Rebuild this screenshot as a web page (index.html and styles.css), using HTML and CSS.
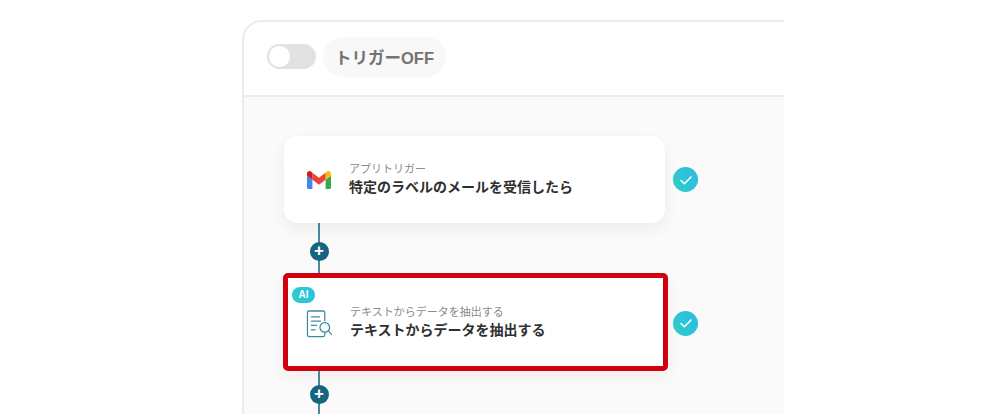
FILE: index.html
```html
<!DOCTYPE html>
<html lang="ja">
<head>
  <meta charset="UTF-8" />
  <title>フローボット</title>
  <link rel="stylesheet" href="styles.css">
</head>
<body>
  <div class="stage">
    <div class="panel">
      <!-- header -->
      <header class="panel-head">
        <span class="toggle"><span class="toggle-knob"></span></span>
        <span class="trigger-pill">トリガーOFF</span>
      </header>

      <!-- flow -->
      <div class="flow">
        <div class="step">
          <div class="card">
            <svg class="icon-gmail" viewBox="0 0 24 18" width="24" height="18">
              <path d="M1.6 18H5.4V8.8L0 4.7V16.4C0 17.3.7 18 1.6 18Z" fill="#4285f4"/>
              <path d="M18.6 18H22.4C23.3 18 24 17.3 24 16.4V4.7L18.6 8.8Z" fill="#34a853"/>
              <path d="M18.6 1.7V8.8L24 4.7V2.6C24 .6 21.7-.6 20.1.6Z" fill="#fbbc04"/>
              <path d="M5.4 8.8V1.7L12 6.7 18.6 1.7V8.8L12 13.7Z" fill="#ea4335"/>
              <path d="M0 2.6V4.7L5.4 8.8V1.7L3.9.6C2.3-.6 0 .6 0 2.6Z" fill="#c5221f"/>
            </svg>
            <div class="card-text">
              <div class="card-sub">アプリトリガー</div>
              <div class="card-title">特定のラベルのメールを受信したら</div>
            </div>
          </div>
          <span class="check">
            <svg viewBox="0 0 24 24" width="24" height="24"><path d="M7 12.5l3.4 3.3L17 9" fill="none" stroke="#fff" stroke-width="1.6" stroke-linecap="round" stroke-linejoin="round"/></svg>
          </span>
        </div>

        <div class="link link-first"><span class="plus">+</span></div>

        <div class="step step-active">
          <div class="frame">
            <div class="card card-framed">
              <span class="ai-badge">AI</span>
              <svg class="icon-doc" viewBox="0 0 28 30" width="27" height="29">
                <g fill="none" stroke="#3d8ba5" stroke-width="1.300" stroke-linecap="round" stroke-linejoin="round">
                  <path d="M19.500 11V2.500C19.500 1.500 19 1 18 1H3C2 1 1.500 1.500 1.500 2.500V26C1.500 27 2 27.500 3 27.500H18C19 27.500 19.500 27 19.500 26V23.500"/>
                  <path d="M5.500 7H14M5.500 11.500H15M5.500 16H11M5.500 20.500H9.500"/>
                  <circle cx="19.500" cy="18" r="5"/>
                  <path d="M23.200 21.700L26.500 25.500"/>
                </g>
              </svg>
              <div class="card-text">
                <div class="card-sub">テキストからデータを抽出する</div>
                <div class="card-title">テキストからデータを抽出する</div>
              </div>
            </div>
          </div>
          <span class="check check-active">
            <svg viewBox="0 0 24 24" width="24" height="24"><path d="M7 12.5l3.4 3.3L17 9" fill="none" stroke="#fff" stroke-width="1.6" stroke-linecap="round" stroke-linejoin="round"/></svg>
          </span>
        </div>

        <div class="link link-second"><span class="plus">+</span></div>
      </div>
    </div>
  </div>
</body>
</html>
```

FILE: styles.css
```css
/* --- design tokens --- */
:root {
  --teal: #17647f;
  --red: #d0000f;
  --line: #ececec;
  --text: #2f2f2f;
}

* { box-sizing: border-box; margin:0; padding:0; }

body {
  font-family: "Liberation Sans", "Noto Sans CJK JP", sans-serif;
  background:#fff;
  color:var(--text);
  overflow:hidden;
}

.stage {
  width:784px;
  height:414px;
  padding:20px 0 0 242px;
  overflow:hidden;
}

.panel {
  width:640px;
  height:520px;
  background:#fafafa;
  border:2px solid var(--line);
  border-radius:20px 0 0 0;
}

/* --- header --- */
.panel-head {
  height:75px;
  background:#fff;
  border-bottom:2px solid var(--line);
  border-radius:18px 0 0 0;
  padding:0 0 4px 23px;
  display:flex;
  align-items:center;
  gap:7px;
}

.toggle {
  width:49px; height:25px;
  background:#e2e2e2;
  border-radius:13px;
  padding:2px;
  display:flex;
}
.toggle-knob {
  width:21px; height:21px;
  background:#fff;
  border-radius:50%;
}

.trigger-pill {
  height:40px;
  width:123px;
  padding-left:12px;
  background:#f8f8f8;
  border-radius:20px;
  display:flex;
  align-items:center;
  font-size:16.500px;
  font-weight:700;
  color:#737373;
}

/* --- flow --- */
.flow { padding:39px 0 0 40px; }

.step {
  display:flex;
  align-items:center;
  gap:8px;
}
.step-active { margin-left:-1px; gap:5px; }

.card {
  width:381px;
  height:87px;
  background:#fff;
  border-radius:14px;
  box-shadow:0 6px 16px rgba(0,0,0,.06);
  padding-left:23px;
  display:flex;
  align-items:center;
  gap:18px;
}

.frame {
  width:385px;
  height:98px;
  border:5px solid var(--red);
  border-radius:5px;
  background:#fff;
  box-shadow:0 6px 16px rgba(0,0,0,.05);
}
.card-framed {
  position:relative;
  width:375px;
  height:88px;
  box-shadow:none;
  padding-left:18px;
  gap:17px;
}

.icon-gmail { flex:none; }
.icon-doc { flex:none; margin-top:4px; }

.card-sub {
  font-size:11px;
  line-height:16px;
  color:#8a8a8a;
}
.card-title {
  font-size:14px;
  font-weight:700;
  line-height:21px;
  color:var(--text);
}

.ai-badge {
  position:absolute;
  left:4px; top:9px;
  width:23px; height:16px;
  border-radius:8px;
  background:linear-gradient(90deg,#2ecdc7,#2cc0e0);
  color:#fff;
  font-size:10px;
  font-weight:700;
  line-height:16px;
  text-align:center;
}

.check {
  width:25px; height:25px;
  border-radius:50%;
  background:linear-gradient(60deg,#2fd0c0,#2cb8e8);
  display:flex;
  align-items:center;
  justify-content:center;
}
.check-active { margin-top:2px; }

/* --- connector --- */
.link {
  width:2px;
  height:50px;
  margin-left:34px;
  background:#4a8aa2;
  display:flex;
  align-items:center;
  justify-content:center;
}
.link-first .plus { margin-top:7px; }
.link-second .plus { margin-bottom:4px; }
.plus {
  flex:none;
  width:19px; height:19px;
  border-radius:50%;
  background:var(--teal);
  color:#fff;
  font-size:17px;
  font-weight:700;
  line-height:18px;
  text-align:center;
}
```
